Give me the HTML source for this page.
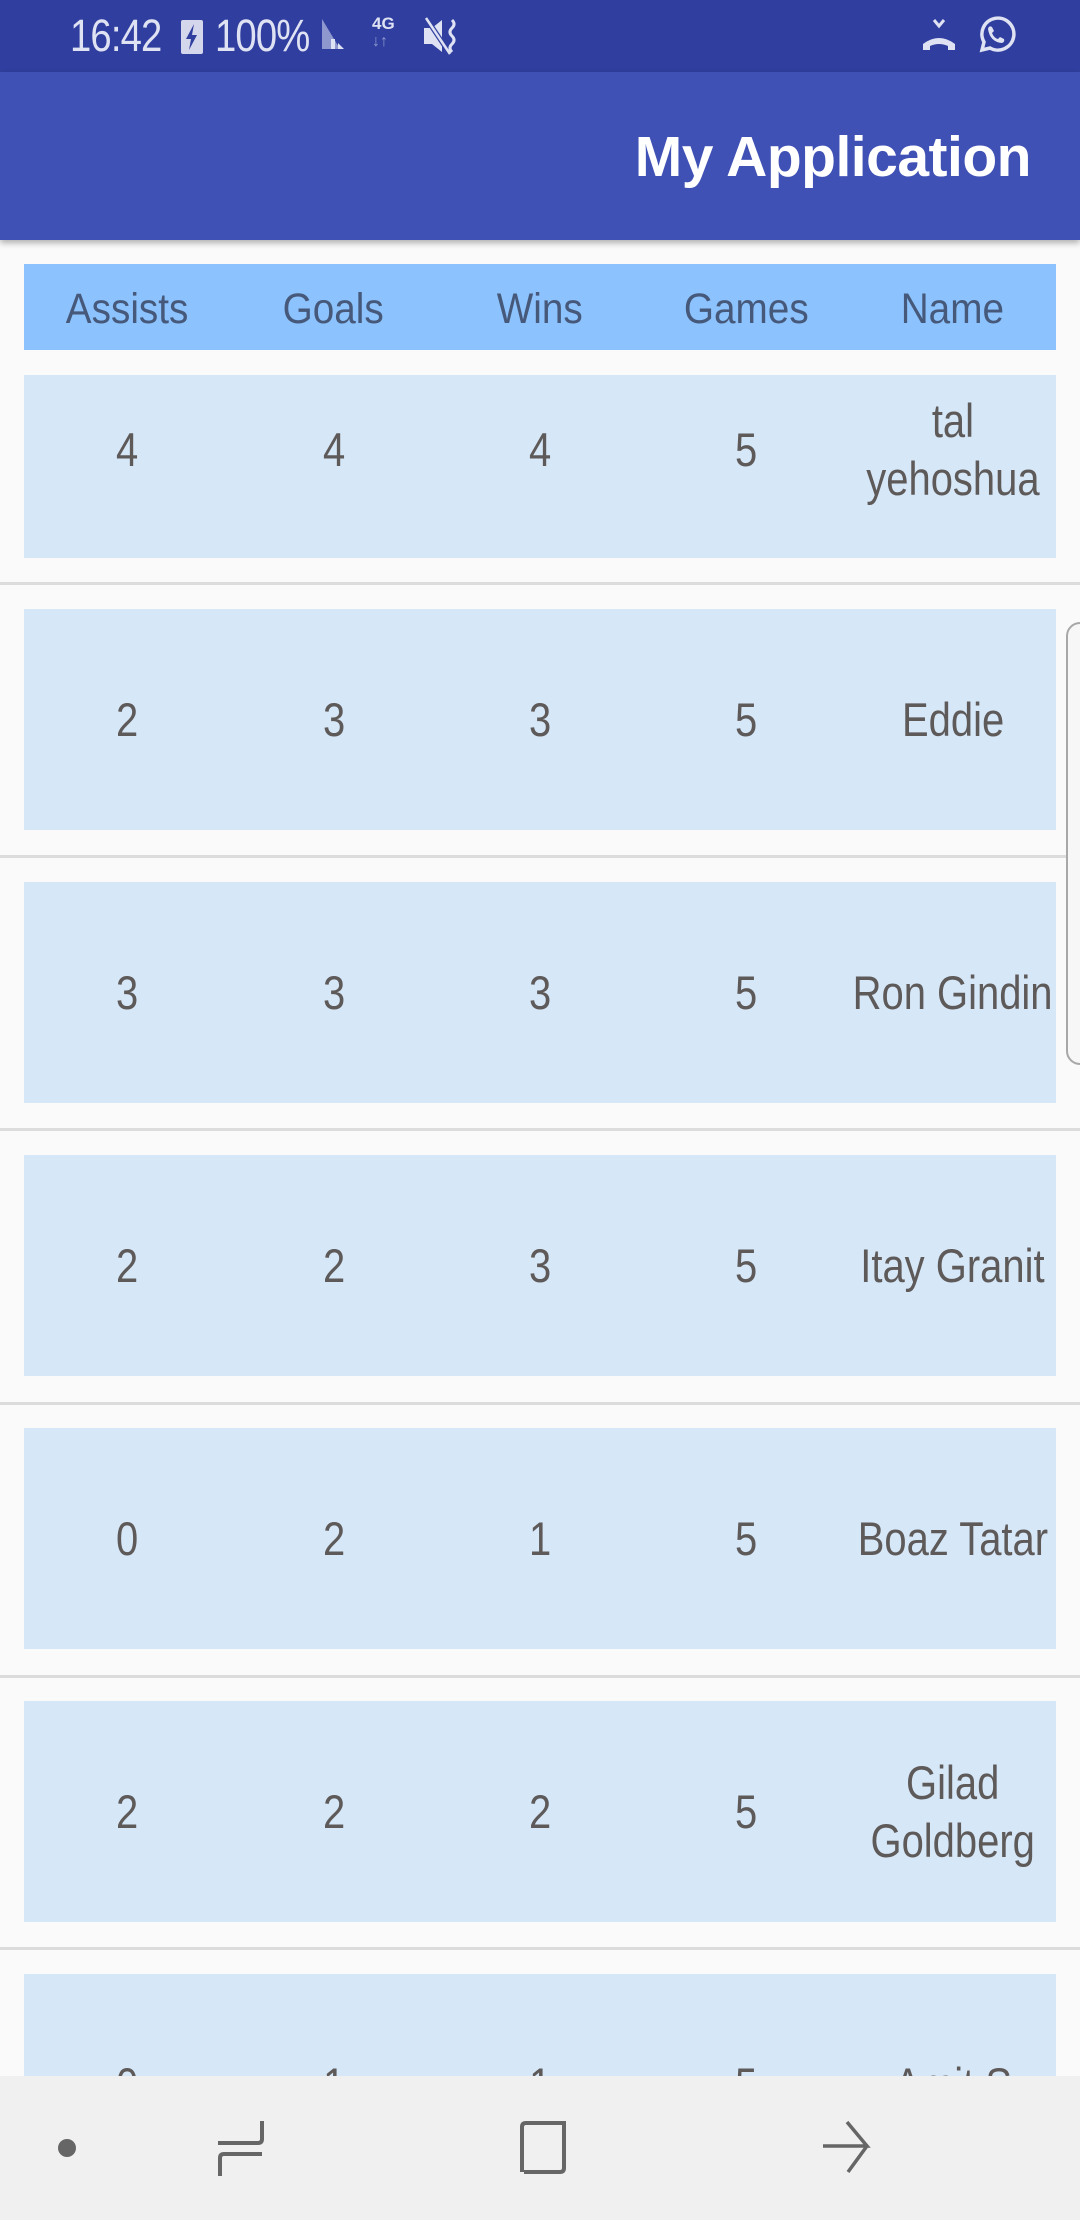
<!DOCTYPE html>
<html><head><meta charset="utf-8"><style>
*{margin:0;padding:0;box-sizing:border-box}
body{width:1080px;height:2220px;overflow:hidden;background:#fafafa;font-family:"Liberation Sans",sans-serif;position:relative}
.sb{position:absolute;left:0;top:0;width:1080px;height:72px;background:#303f9f;color:#dfe2f3}
.ab{position:absolute;left:0;top:72px;width:1080px;height:168px;background:#3f51b5;box-shadow:0 3px 6px rgba(0,0,0,.3)}
.ab span{position:absolute;right:49px;top:52px;font-size:57px;font-weight:bold;color:#fff;letter-spacing:-0.5px}
.hd{position:absolute;left:24px;top:264px;width:1032px;height:86px;background:#8cc2fd;display:flex}
.c{width:206.4px;display:flex;align-items:center;justify-content:center;text-align:center}
.hd .c{font-size:43px;color:#46597a;padding-top:4px}
.hd .c span{display:inline-block;transform:scaleX(.9)}
.row{position:absolute;left:24px;width:1032px;height:221px;background:#d6e7f8;display:flex}
.row .c{font-size:47px;color:#5e5a59;line-height:58px}
.row .c span{display:inline-block;transform:scaleX(.85);white-space:nowrap}
.dv{position:absolute;left:0;width:1080px;height:3px;background:#dcdcdc}
.nav{position:absolute;left:0;top:2076px;width:1080px;height:144px;background:#f0f0f0}
.scr{position:absolute;left:1066px;top:622px;width:20px;height:443px;border:2px solid #a8a8a8;border-radius:14px 0 0 14px;background:#f7f7f7}
.st{position:absolute;top:10px;font-size:45px;letter-spacing:-1px;display:inline-block;transform:scaleX(.85);transform-origin:left}
</style></head><body>
<div class="sb">
<div class="st" style="left:70px">16:42</div>
<div style="position:absolute;left:181px;top:20px;width:22px;height:34px;background:#d4d6ec;border-radius:2px"></div>
<svg style="position:absolute;left:184px;top:24px" width="16" height="26"><path d="M10 0L2 15h5l-2 11 8-15H8z" fill="#303f9f"/></svg>
<div class="st" style="left:215px">100%</div>
<svg style="position:absolute;left:320px;top:17px" width="40" height="40"><path d="M2 32V2L20 32Z" fill="#8e98cf"/><rect x="11" y="22" width="4" height="10" fill="#dfe2f3"/><path d="M18 26l6 6h-6z" fill="#dfe2f3"/></svg>
<div style="position:absolute;left:372px;top:14px;font-size:17px;font-weight:bold">4G</div>
<div style="position:absolute;left:372px;top:33px;font-size:16px;color:#8e98cf">↓↑</div>
<svg style="position:absolute;left:422px;top:16px" width="40" height="40"><path d="M2 12h8l10-8v32l-10-8H2z" fill="#dfe2f3"/><path d="M4 2l24 36" stroke="#303f9f" stroke-width="5"/><path d="M4 2l24 36" stroke="#dfe2f3" stroke-width="2.5"/><path d="M30 4q4 4 0 8q-4 4 0 8q4 4 0 8q-4 4 0 8" stroke="#dfe2f3" stroke-width="3" fill="none"/></svg>
<svg style="position:absolute;left:920px;top:18px" width="44" height="36"><path d="M14 2l5 6 5-6" stroke="#dfe2f3" stroke-width="3" fill="none"/><path d="M3 32v-6q16-12 32 0v6h-7v-4q-9-4-18 0v4z" fill="#dfe2f3"/></svg>
<svg style="position:absolute;left:974px;top:14px" width="42" height="42"><path d="M8 36l2-8a16 16 0 1 1 6 6z" stroke="#dfe2f3" stroke-width="3.5" fill="none"/><path d="M14 15q1-4 4-2l2 4-2 2q2 5 6 6l2-2 4 2q1 3-2 4q-12-1-14-14z" fill="#dfe2f3"/></svg>
</div>
<div class="ab"><span>My Application</span></div>
<div class="hd"><div class="c"><span>Assists</span></div><div class="c"><span>Goals</span></div><div class="c"><span>Wins</span></div><div class="c"><span>Games</span></div><div class="c"><span>Name</span></div></div>

<div class="row" style="top:375px;height:183px;padding-bottom:34px"><div class="c"><span>4</span></div><div class="c"><span>4</span></div><div class="c"><span>4</span></div><div class="c"><span>5</span></div><div class="c"><span>tal<br>yehoshua</span></div></div>
<div class="dv" style="top:582px"></div>
<div class="row" style="top:609px"><div class="c"><span>2</span></div><div class="c"><span>3</span></div><div class="c"><span>3</span></div><div class="c"><span>5</span></div><div class="c"><span>Eddie</span></div></div>
<div class="dv" style="top:855px"></div>
<div class="row" style="top:882px"><div class="c"><span>3</span></div><div class="c"><span>3</span></div><div class="c"><span>3</span></div><div class="c"><span>5</span></div><div class="c"><span>Ron Gindin</span></div></div>
<div class="dv" style="top:1128px"></div>
<div class="row" style="top:1155px"><div class="c"><span>2</span></div><div class="c"><span>2</span></div><div class="c"><span>3</span></div><div class="c"><span>5</span></div><div class="c"><span>Itay Granit</span></div></div>
<div class="dv" style="top:1402px"></div>
<div class="row" style="top:1428px"><div class="c"><span>0</span></div><div class="c"><span>2</span></div><div class="c"><span>1</span></div><div class="c"><span>5</span></div><div class="c"><span>Boaz Tatar</span></div></div>
<div class="dv" style="top:1675px"></div>
<div class="row" style="top:1701px"><div class="c"><span>2</span></div><div class="c"><span>2</span></div><div class="c"><span>2</span></div><div class="c"><span>5</span></div><div class="c"><span>Gilad<br>Goldberg</span></div></div>
<div class="dv" style="top:1947px"></div>
<div class="row" style="top:1974px"><div class="c"><span>0</span></div><div class="c"><span>1</span></div><div class="c"><span>1</span></div><div class="c"><span>5</span></div><div class="c"><span>Amit S</span></div></div>
<div class="scr"></div>
<div class="nav">
<svg width="1080" height="144" style="position:absolute;left:0;top:0">
<ellipse cx="67" cy="72" rx="9" ry="9" fill="#666"/>
<path d="M262 45v18q0 4-4 4h-40M262 78h-38q-4 0-4 4v18" stroke="#666" stroke-width="4" fill="none"/>
<path d="M566 47h-40q-4 0-4 4v45M564 49v43q0 4-4 4h-36" stroke="#666" stroke-width="4" fill="none"/>
<path d="M847 46l20 24h-44M867 70l-19 26" stroke="#666" stroke-width="3.5" fill="none"/>
</svg>
</div>
</body></html>
